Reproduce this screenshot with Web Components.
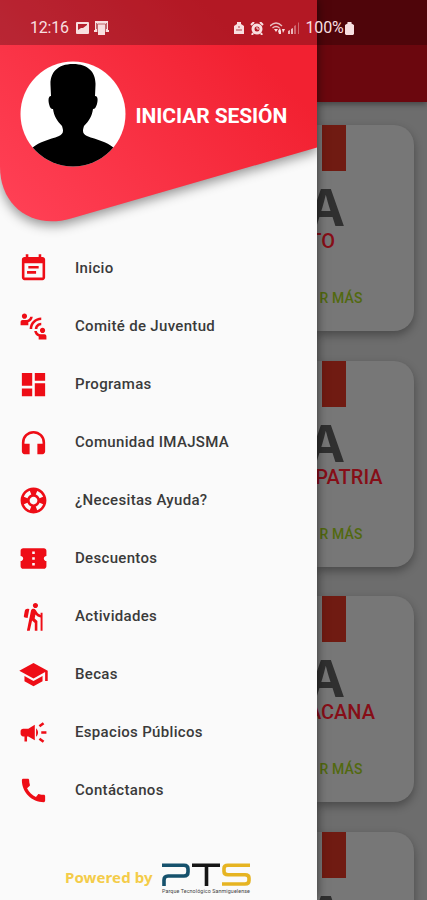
<!DOCTYPE html>
<html lang="es">
<head>
<meta charset="utf-8">
<title>Menú</title>
<style>
html,body{margin:0;height:100%;overflow:hidden;background:#fafafa;font-family:Roboto,"Liberation Sans",sans-serif}
</style>
</head>
<body>
<youth-app></youth-app>
<script>
const define = (name, html) => customElements.define(name, class extends HTMLElement {
  connectedCallback() {
    if (this.shadowRoot) return;
    this.attachShadow({ mode: 'open' }).innerHTML = typeof html === 'function' ? html(this) : html;
  }
});

const ICONS = {
  event: 'M16 10H8v2h8v-2zm3-7h-1V1h-2v2H8V1H6v2H5c-1.11 0-1.99.9-1.99 2L3 19c0 1.1.89 2 2 2h14c1.1 0 2-.9 2-2V5c0-1.1-.9-2-2-2zm0 16H5V8h14v11zm-5-5H7v2h7v-2z',
  connect: 'M11,14H9c0-4.97,4.03-9,9-9v2C14.13,7,11,10.13,11,14z M18,11V9c-2.76,0-5,2.24-5,5h2C15,12.34,16.34,11,18,11z M7,4c0-1.11-0.89-2-2-2S3,2.89,3,4s0.89,2,2,2S7,5.11,7,4z M11.45,4.5h-2C9.21,5.92,7.99,7,6.5,7h-3C2.67,7,2,7.67,2,8.5V11h6V8.74C9.86,8.15,11.25,6.51,11.45,4.5z M19,17c1.11,0,2-0.89,2-2s-0.89-2-2-2s-2,0.89-2,2S17.89,17,19,17z M20.5,18h-3c-1.49,0-2.71-1.08-2.95-2.5h-2c0.2,2.01,1.59,3.65,3.45,4.24V22h6v-2.5C22,18.67,21.33,18,20.5,18z',
  dashboard: 'M3 13h8V3H3v10zm0 8h8v-6H3v6zm10 0h8V11h-8v10zm0-18v6h8V3h-8z',
  headphones: 'M12 3a9 9 0 0 0-9 9v7c0 1.1.9 2 2 2h4v-8H5v-1a7 7 0 0 1 14 0v1h-4v8h4c1.1 0 2-.9 2-2v-7a9 9 0 0 0-9-9z',
  support: 'M12 2C6.48 2 2 6.48 2 12s4.48 10 10 10 10-4.48 10-10S17.52 2 12 2zm7.46 7.12l-2.78 1.15c-.51-1.36-1.58-2.44-2.95-2.94l1.15-2.78c2.1.8 3.77 2.47 4.58 4.57zM12 15c-1.66 0-3-1.34-3-3s1.34-3 3-3 3 1.34 3 3-1.34 3-3 3zM9.13 4.54l1.17 2.78c-1.38.5-2.47 1.59-2.98 2.97L4.54 9.13c.81-2.11 2.48-3.78 4.59-4.59zM4.54 14.87l2.78-1.15c.51 1.38 1.59 2.46 2.97 2.96l-1.17 2.78c-2.1-.81-3.77-2.48-4.58-4.59zm10.34 4.59l-1.15-2.78c1.37-.51 2.45-1.59 2.95-2.97l2.78 1.17c-.81 2.1-2.48 3.77-4.58 4.58z',
  ticket: 'M22 10V6c0-1.11-.9-2-2-2H4c-1.1 0-1.99.89-1.99 2v4c1.1 0 1.99.9 1.99 2s-.89 2-2 2v4c0 1.1.9 2 2 2h16c1.1 0 2-.9 2-2v-4c-1.1 0-2-.9-2-2s.9-2 2-2zm-9 7.5h-2v-2h2v2zm0-4.5h-2v-2h2v2zm0-4.5h-2v-2h2v2z',
  hiking: 'M13.5 5.5c1.1 0 2-.9 2-2s-.9-2-2-2-2 .9-2 2 .9 2 2 2zM17.5 10.78c-1.23-.37-2.22-1.17-2.8-2.18l-1-1.6c-.41-.65-1.11-1-1.84-1-.78 0-1.59.5-1.78 1.44S7 23 7 23h2.1l1.8-8 2.1 2v6h2v-7.5l-2.1-2 .6-3c1 1.15 2.41 2.01 4 2.34V23H19V9h-1.5v1.78zM7.43 13.13l-2.12-.41c-.54-.11-.9-.63-.79-1.17l.76-3.93c.21-1.08 1.26-1.79 2.34-1.58l1.16.23L7.43 13.13z',
  school: 'M5 13.18v4L12 21l7-3.82v-4L12 17l-7-3.82zM12 3L1 9l11 6 9-4.91V17h2V9L12 3z',
  campaign: 'M18 11v2h4v-2h-4zM16 17.61c.96.71 2.21 1.65 3.2 2.39.4-.53.8-1.07 1.2-1.6-.99-.74-2.24-1.68-3.2-2.4-.4.54-.8 1.08-1.2 1.61zM20.4 5.6c-.4-.53-.8-1.07-1.2-1.6-.99.74-2.24 1.68-3.2 2.4.4.53.8 1.07 1.2 1.6.96-.72 2.21-1.65 3.2-2.4zM4 9c-1.1 0-2 .9-2 2v2c0 1.1.9 2 2 2h1v4h2v-4h1l5 3V6L8 9H4zm11.5 3c0-1.33-.58-2.53-1.5-3.35v6.69c.92-.81 1.5-2.01 1.5-3.34z',
  call: 'M20.01 15.38c-1.23 0-2.42-.2-3.53-.56-.35-.12-.74-.03-1.01.24l-1.57 1.97c-2.83-1.35-5.48-3.9-6.89-6.83l1.95-1.66c.27-.28.35-.67.24-1.02-.37-1.11-.56-2.3-.56-3.53 0-.54-.45-.99-.99-.99H4.19C3.65 3 3 3.24 3 3.99 3 13.28 10.73 21 20.01 21c.71 0 .99-.63.99-1.18v-3.45c0-.54-.45-.99-.99-.99z'
};

define('status-bar', `
<style>
:host{display:flex;align-items:center;height:44.5px;padding:12px 73px 0 30px;box-sizing:border-box;background:rgba(0,0,0,.26);color:#f8dfe0;font-size:16px;line-height:18px}
svg{display:block;flex:none;fill:#f8dfe0}
.time{width:46px;letter-spacing:-.2px}
.left{display:flex;gap:5px;align-items:center}
.right{display:flex;align-items:center;margin-left:auto}
</style>
<span class="time">12:16</span>
<div class="left">
 <svg width="13" height="12"><path fill-rule="evenodd" d="M1 0h11q1 0 1 1v10q0 1-1 1H1q-1 0-1-1V1q0-1 1-1zm1 2v6l3-2 2 0 4-3V2z"/></svg>
 <svg width="15" height="14"><path d="M1 0h13v9h1v2h-4v3H4v-3H0V9h1z"/><path d="M3.500 11V3h8v8M2.500 2v6M12.500 2v6" stroke="#b3454c" stroke-width=".8" fill="none"/></svg>
</div>
<div class="right">
 <svg width="10" height="12"><path d="M0 4l3-2V0h4v2l3 2v8H0z"/><path d="M2 8h6M4 5h2" stroke="#b3454c" fill="none"/></svg>
 <svg width="14" height="13" style="margin-left:6px"><circle cx="7" cy="7" r="4" fill="none" stroke="#f8dfe0" stroke-width="3"/><path d="M1 3l3-3M10 0l3 3M3 11l-1 2M11 11l1 2" stroke="#f8dfe0" stroke-width="2"/><path d="M7 5v2h2" stroke="#f8dfe0" fill="none"/></svg>
 <svg width="15" height="13" style="margin-left:6px"><path d="M0 4q6-6 12 0M2.500 6q3.500-3 7 0" stroke="#e9bfc1" stroke-width="1.300" fill="none"/><path d="M4 7h4L6 10zM8 9l2-3 1 3v3H9zM12 7h3l-2 4z"/></svg>
 <svg width="12" height="12" style="margin-left:3px"><path d="M0 12V9l2-1v4zM3 12V7l2-1v6z" opacity=".8"/><path d="M6 12V4l2-1v9zM10 12V1l1-1v12z" opacity=".4"/></svg>
 <span style="margin-left:6px;width:39.500px;letter-spacing:-.15px">100%</span>
 <svg width="9" height="13"><path d="M2.500 0h4v1.500L9 3v9l-1 1H1l-1-1V3l2.500-1.500z"/></svg>
</div>`);

define('user-avatar', `
<style>:host{display:block;width:106px;height:106px}svg{display:block}</style>
<svg width="106" height="106" viewBox="0 0 106 106"><defs><clipPath id="c"><circle cx="53" cy="53" r="52.500"/></clipPath></defs>
<circle cx="53" cy="53" r="52.500" fill="#fff"/>
<path clip-path="url(#c)" d="M53 3C37 3 30 12 30.500 24l.5 11c-2.500 0-3 4-2 8s2 5 4 5c1 7 4 12 9 17 2 6 1 8-3 10-10 4-19 5-27 12v20h82V87c-8-7-17-8-27-12-4-2-5-4-3-10 5-5 8-10 9-17 2 0 3-2 4-5 1-4 1-8-2-8l.5-11C76 12 69 3 53 3z"/></svg>`);

define('drawer-header', `
<style>
:host{display:grid;height:239px;grid-template:239px/317px;overflow:hidden}
svg,.user{grid-area:1/1}
svg{display:block;filter:drop-shadow(0 4px 6px rgba(0,0,0,.42))}
.user{display:flex;align-self:start;align-items:center;gap:9.500px;margin:61px 0 0 20px;z-index:1}
b{color:#fff;font-size:21px;line-height:26px;font-weight:700;white-space:nowrap;letter-spacing:-.1px;margin-top:3px}
</style>
<svg width="317" height="239"><defs><linearGradient id="g" gradientUnits="userSpaceOnUse" x1="20" y1="220" x2="220" y2="20"><stop stop-color="#ff4055"/><stop offset="1" stop-color="#f22131"/></linearGradient></defs>
<path fill="url(#g)" d="M0 0H317V147.500L71 218.500C31 230 0 205 0 167z"/></svg>
<div class="user"><user-avatar></user-avatar><b>INICIAR SESIÓN</b></div>`);

define('menu-item', el => `
<style>
:host{display:flex;align-items:center;height:58px;padding-left:17.5px;gap:26.5px;box-sizing:border-box;color:#3a3a3a;font-size:15px;font-weight:500;letter-spacing:.32px;white-space:nowrap}
svg{width:31px;height:31px;fill:#ee0d16;flex:none}
</style>
<svg viewBox="0 0 24 24"><path d="${ICONS[el.getAttribute('icon')]}"/></svg><span><slot></slot></span>`);

define('powered-by', `
<style>
:host{display:flex;align-items:flex-start;gap:7px;padding-left:65px;height:41px}
b{font:700 15px/20px "Noto Sans","Open Sans",sans-serif;color:#f4cc49;margin-top:9px;width:90px;white-space:nowrap;letter-spacing:.1px}
.logo{display:flex;flex-direction:column;gap:2px;width:90px;margin-top:3px}
svg{display:block}
small{font-size:5.3px;line-height:6px;color:#444;letter-spacing:.12px;white-space:nowrap}
</style>
<b>Powered by</b>
<div class="logo"><svg width="90" height="25" fill="none" stroke-width="3.600">
<path stroke="#15516c" d="M0 4.300H22Q26 4.300 26 8V11Q26 15 22 15H6Q2 15 2 19V25"/>
<path stroke="#151515" d="M30 4.300H58M44.500 4V25"/>
<path stroke="#e6b422" d="M88 4.300H66Q62 4.300 62 7.500V10.500Q62 13.700 66 13.700H83Q87 13.700 87 17V19.500Q87 23 83 23H60"/></svg>
<small>Parque Tecnológico Sanmiguelense</small></div>`);

define('nav-drawer', `
<style>
:host{display:flex;flex-direction:column;width:317px;height:900px;background:#fafafa;box-shadow:0 0 10px rgba(0,0,0,.55)}
nav{display:flex;flex-direction:column}
powered-by{margin-top:39px}
</style>
<drawer-header></drawer-header>
<nav>
<menu-item icon="event">Inicio</menu-item>
<menu-item icon="connect">Comité de Juventud</menu-item>
<menu-item icon="dashboard">Programas</menu-item>
<menu-item icon="headphones">Comunidad IMAJSMA</menu-item>
<menu-item icon="support">¿Necesitas Ayuda?</menu-item>
<menu-item icon="ticket">Descuentos</menu-item>
<menu-item icon="hiking">Actividades</menu-item>
<menu-item icon="school">Becas</menu-item>
<menu-item icon="campaign">Espacios Públicos</menu-item>
<menu-item icon="call">Contáctanos</menu-item>
</nav>
<powered-by></powered-by>`);

define('program-card', el => `
<style>
:host{display:flex;flex-direction:column;height:206px;width:97px;flex:none;background:#777;border-radius:0 20px 20px 0;box-shadow:0 4px 10px rgba(0,0,0,.33)}
.bar{width:24px;height:46px;background:#701b12;margin-left:5px}
.row{display:flex;justify-content:flex-end;white-space:nowrap}
.big{font:700 51px/38px Inter,sans-serif;color:#303030;width:28px;margin-top:18px}
.name{font-size:20px;line-height:24px;font-weight:500;color:#860e17;margin-top:2px;width:var(--end)}
.more{font-size:14px;line-height:18px;font-weight:500;color:#52690f;margin-top:36px;width:45.500px;letter-spacing:.1px}
</style>
<div class="bar"></div>
<div class="row big">A</div>
<div class="row name" style="--end:${el.getAttribute('end')}px"><slot></slot></div>
<div class="row more">R MÁS</div>`);

define('program-feed', `
<style>
:host{display:flex;flex-direction:column;width:110px;height:900px;overflow:hidden;background:#6d6d6d}
header{height:102px;flex:none;background:#6b070e;box-shadow:0 2px 6px rgba(0,0,0,.4)}
main{display:flex;flex-direction:column;gap:29.500px;padding-top:23px}
</style>
<header></header>
<main>
<program-card end="18">TO</program-card>
<program-card end="65.500">PATRIA</program-card>
<program-card end="58">ACANA</program-card>
<program-card end="18"></program-card>
</main>`);

define('youth-app', `
<style>
:host{display:grid;grid-template:900px/317px 110px;width:427px;height:900px;overflow:hidden}
nav-drawer{grid-area:1/1;z-index:1}
program-feed{grid-area:1/2}
status-bar{grid-area:1/1/2/3;align-self:start;z-index:2}
</style>
<nav-drawer></nav-drawer><program-feed></program-feed><status-bar></status-bar>`);
</script>
</body>
</html>
